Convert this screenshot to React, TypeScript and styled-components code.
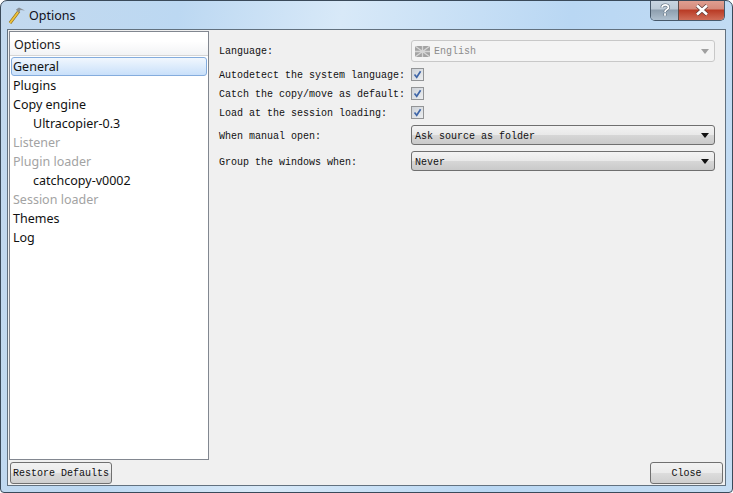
import styled, { createGlobalStyle } from 'styled-components';

const GlobalStyle = createGlobalStyle`
  html, body {
    margin: 0;
    padding: 0;
    background: #ffffff;
  }
`;

const Window = styled.div`
  box-sizing: border-box;
  width: 733px;
  height: 493px;
  display: flex;
  flex-direction: column;
  padding: 0 6px 6px;
  border: 1px solid #3a4a5a;
  border-radius: 7px 7px 4px 4px;
  overflow: hidden;
  background: linear-gradient(100deg, #c3d9ee 0%, #bcd8f2 22%, #d8e9f8 42%, #b9d7f3 70%, #c5ddf3 100%);
`;

const TitleBar = styled.div`
  height: 28px;
  flex: none;
  display: flex;
  align-items: flex-start;
`;

const AppIcon = styled.svg`
  width: 18px;
  height: 18px;
  margin-top: 5px;
  margin-left: 1px;
`;

const TitleText = styled.span`
  margin: 6px 0 0 3px;
  font: 12.5px/18px "Noto Sans", sans-serif;
  color: #101020;
`;

const Controls = styled.div`
  margin-left: auto;
  margin-right: 1px;
  margin-top: -1px;
  display: flex;
  height: 20px;
  border: 1px solid #47596b;
  border-top: none;
  border-radius: 0 0 5px 5px;
  overflow: hidden;
`;

const HelpButton = styled.div`
  width: 27px;
  display: flex;
  align-items: center;
  justify-content: center;
  border-right: 1px solid #5d4a48;
  background: linear-gradient(#c9d6e2 0%, #bccad6 45%, #8d9eae 50%, #aebfce 100%);
`;

const CloseButton = styled.div`
  width: 45px;
  display: flex;
  align-items: center;
  justify-content: center;
  background: linear-gradient(#e0a193 0%, #d58a7b 45%, #b93a24 50%, #cf6d58 100%);
`;

const Client = styled.div`
  flex: 1;
  min-height: 0;
  display: flex;
  flex-direction: column;
  border: 1px solid #62717f;
  background: #f0f0f0;
  padding: 1px 1px 1px;
`;

const Main = styled.div`
  flex: 1;
  min-height: 0;
  display: flex;
`;

const Tree = styled.div`
  box-sizing: border-box;
  width: 200px;
  flex: none;
  background: #fff;
  border: 1px solid #828790;
  font: 12.5px/19px "Noto Sans", sans-serif;
  color: #111;
`;

const TreeHeader = styled.div`
  box-sizing: border-box;
  height: 24px;
  padding: 3px 0 0 4px;
  color: #1a1a1a;
  background: linear-gradient(#ffffff 0%, #ffffff 40%, #f2f3f5 100%);
  border-bottom: 1px solid #d5d5d5;
`;

const TreeList = styled.div`
  padding: 1px 1px 0;
`;

const TreeItem = styled.div<{ $level?: number; $disabled?: boolean; $selected?: boolean }>`
  box-sizing: border-box;
  height: 19px;
  line-height: 17px;
  padding-left: ${(p) => (p.$level ? 21 : 1)}px;
  color: ${(p) => (p.$disabled ? '#a3a3a3' : '#111')};
  border: 1px solid ${(p) => (p.$selected ? '#84acdd' : 'transparent')};
  border-radius: 3px;
  background: ${(p) => (p.$selected ? 'linear-gradient(#f1f7fe, #c9e0fa)' : 'none')};
`;

const Form = styled.div`
  flex: 1;
  padding: 9px 10px 0 10px;
  display: grid;
  grid-template-columns: 192px 304px;
  grid-auto-rows: min-content;
  align-content: start;
  font: 10px/12px "Liberation Mono", monospace;
  color: #111;
`;

const Label = styled.div<{ $h: number; $gap?: number; $drop?: number }>`
  box-sizing: border-box;
  height: ${(p) => p.$h}px;
  margin-bottom: ${(p) => p.$gap ?? 0}px;
  padding-top: ${(p) => (p.$drop ?? 2)}px;
  display: flex;
  align-items: center;
  white-space: nowrap;
`;

const FieldCell = styled.div<{ $h: number; $gap?: number }>`
  height: ${(p) => p.$h}px;
  margin-bottom: ${(p) => p.$gap ?? 0}px;
  display: flex;
  align-items: center;
`;

const Check = styled.div`
  box-sizing: border-box;
  width: 13px;
  height: 13px;
  border: 1px solid #929496;
  background: linear-gradient(135deg, #cdd2d8, #eceef0);
  display: flex;
  align-items: center;
  justify-content: center;
`;

const Combo = styled.div<{ $disabled?: boolean }>`
  box-sizing: border-box;
  width: 304px;
  height: ${(p) => (p.$disabled ? 22 : 20)}px;
  display: flex;
  align-items: center;
  padding: 0 4px 0 3px;
  border-radius: 3px;
  border: 1px solid ${(p) => (p.$disabled ? '#c8c8c8' : '#6f6f6f')};
  color: ${(p) => (p.$disabled ? '#8c8c8c' : '#111')};
  background: ${(p) =>
    p.$disabled
      ? '#f4f4f4'
      : 'linear-gradient(#f3f3f3 0%, #e9e9e9 48%, #d6d6d6 52%, #c9c9c9 100%)'};
`;

const ComboText = styled.span<{ $drop: number }>`
  flex: 1;
  padding-top: ${(p) => p.$drop}px;
`;

const Arrow = styled.div<{ $disabled?: boolean }>`
  width: 0;
  height: 0;
  margin-right: 1px;
  border-left: 4px solid transparent;
  border-right: 4px solid transparent;
  border-top: 5px solid ${(p) => (p.$disabled ? '#a0a0a0' : '#111')};
`;

const Flag = styled.svg`
  width: 15px;
  height: 11px;
  margin-right: 4px;
`;

const Footer = styled.div`
  flex: none;
  height: 24px;
  display: flex;
  align-items: flex-end;
  justify-content: space-between;
  padding: 0 1px;
`;

const PushButton = styled.div<{ $w: number }>`
  box-sizing: border-box;
  width: ${(p) => p.$w}px;
  height: 22px;
  display: flex;
  align-items: center;
  justify-content: center;
  padding-top: 2px;
  border: 1px solid #707070;
  border-radius: 3px;
  font: 10px/12px "Liberation Mono", monospace;
  color: #111;
  background: linear-gradient(#f2f2f2 0%, #ebebeb 48%, #dcdcdc 52%, #cfcfcf 100%);
`;

const checkRows = [
  'Autodetect the system language:',
  'Catch the copy/move as default:',
  'Load at the session loading:',
];

const treeItems = [
  { text: 'General', selected: true },
  { text: 'Plugins' },
  { text: 'Copy engine' },
  { text: 'Ultracopier-0.3', level: 1 },
  { text: 'Listener', disabled: true },
  { text: 'Plugin loader', disabled: true },
  { text: 'catchcopy-v0002', level: 1 },
  { text: 'Session loader', disabled: true },
  { text: 'Themes' },
  { text: 'Log' },
];

function CheckMark() {
  return (
    <svg width="9" height="9" viewBox="0 0 9 9">
      <path d="M1.5 4.5 L3.7 7.2 L7.6 1.2" fill="none" stroke="#3f66a8" strokeWidth="1.7" />
    </svg>
  );
}

function CheckRow({ text, gap }: { text: string; gap: number }) {
  return (
    <>
      <Label $h={19} $gap={gap}>{text}</Label>
      <FieldCell $h={19} $gap={gap}>
        <Check>
          <CheckMark />
        </Check>
      </FieldCell>
    </>
  );
}

export default function App() {
  return (
    <>
      <GlobalStyle />
      <Window>
        <TitleBar>
          <AppIcon viewBox="0 0 18 18">
            <path d="M2 17 L11 5" stroke="#8a6a1a" strokeWidth="3" fill="none" />
            <path d="M2 17 L11 5" stroke="#eec23a" strokeWidth="2" fill="none" />
            <path d="M8 3.5 L11 1.5 L17 4.5 L12.5 4 L10.5 7 Z" fill="#8b9197" />
          </AppIcon>
          <TitleText>Options</TitleText>
          <Controls>
            <HelpButton>
              <svg width="12" height="14" viewBox="0 0 12 14">
                <path
                  d="M3 4.5 C3 1 9.5 1 9.5 4.5 C9.5 6.7 6 6.5 6 9 M6 10.2 V12.8"
                  fill="none"
                  stroke="#5b6b7b"
                  strokeWidth="3"
                />
                <path
                  d="M3 4.5 C3 1 9.5 1 9.5 4.5 C9.5 6.7 6 6.5 6 9 M6 10.2 V12.8"
                  fill="none"
                  stroke="#ffffff"
                  strokeWidth="1.8"
                />
              </svg>
            </HelpButton>
            <CloseButton>
              <svg width="14" height="12" viewBox="0 0 14 12">
                <path d="M2 1.5 L12 10.5 M12 1.5 L2 10.5" stroke="#5c3a38" strokeWidth="4" />
                <path d="M2 1.5 L12 10.5 M12 1.5 L2 10.5" stroke="#ffffff" strokeWidth="2.6" />
              </svg>
            </CloseButton>
          </Controls>
        </TitleBar>
        <Client>
          <Main>
            <Tree>
              <TreeHeader>Options</TreeHeader>
              <TreeList>
                {treeItems.map((item) => (
                  <TreeItem
                    key={item.text}
                    $level={item.level}
                    $disabled={item.disabled}
                    $selected={item.selected}
                  >
                    {item.text}
                  </TreeItem>
                ))}
              </TreeList>
            </Tree>
            <Form>
              <Label $h={22} $gap={3}>Language:</Label>
              <FieldCell $h={22} $gap={3}>
                <Combo $disabled>
                  <Flag viewBox="0 0 15 11">
                    <rect width="15" height="11" fill="#a3a3a3" />
                    <path d="M0 5.5 H15 M7.5 0 V11 M0 0 L15 11 M15 0 L0 11" stroke="#d6d6d6" strokeWidth="1.3" />
                  </Flag>
                  <ComboText $drop={2}>English</ComboText>
                  <Arrow $disabled />
                </Combo>
              </FieldCell>
              {checkRows.map((text, i) => (
                <CheckRow key={text} text={text} gap={i === 2 ? 3 : 0} />
              ))}
              <Label $h={20} $gap={6} $drop={4}>When manual open:</Label>
              <FieldCell $h={20} $gap={6}>
                <Combo>
                  <ComboText $drop={4}>Ask source as folder</ComboText>
                  <Arrow />
                </Combo>
              </FieldCell>
              <Label $h={20} $drop={4}>Group the windows when:</Label>
              <FieldCell $h={20}>
                <Combo>
                  <ComboText $drop={4}>Never</ComboText>
                  <Arrow />
                </Combo>
              </FieldCell>
            </Form>
          </Main>
          <Footer>
            <PushButton $w={102}>Restore Defaults</PushButton>
            <PushButton $w={73}>Close</PushButton>
          </Footer>
        </Client>
      </Window>
    </>
  );
}
